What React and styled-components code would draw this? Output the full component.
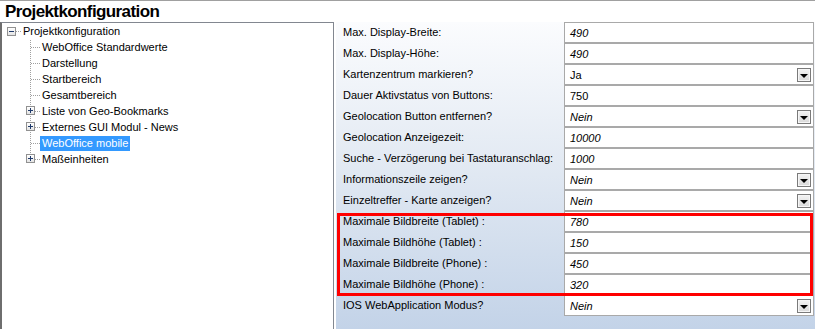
import React from "react";
import styled, { createGlobalStyle, css } from "styled-components";

const GlobalStyle = createGlobalStyle`
  html, body { margin: 0; padding: 0; background: #ffffff; }
  body { font-family: "Liberation Sans", Arial, sans-serif; }
  * { box-sizing: border-box; }
`;

const Window = styled.div`
  width: 815px;
  height: 329px;
  overflow: hidden;
  border-top: 1px solid #a0a0a0;
  background: #ffffff;
  display: flex;
  flex-direction: column;
`;

const Title = styled.div`
  height: 21px;
  padding-left: 5px;
  font-family: "Liberation Sans", Arial, sans-serif;
  font-weight: bold;
  font-size: 17px;
  letter-spacing: -0.6px;
  line-height: 22px;
  color: #000;
`;

const Body = styled.div`
  flex: 1;
  display: flex;
  gap: 2px;
  min-height: 0;
`;

const TreePanel = styled.div`
  width: 334px;
  flex: none;
  border-top: 1px solid #828790;
  border-left: 2px solid #6e6e6e;
  border-right: 1px solid #828790;
  background: #fff;
  font-size: 11px;
  color: #000;
`;

const TreeRow = styled.div`
  height: 16px;
  display: flex;
  align-items: center;
`;

const RootExpander = styled.div`
  width: 9px;
  height: 9px;
  margin-left: 5px;
  flex: none;
  position: relative;
  border: 1px solid #919191;
  background: linear-gradient(#ffffff, #e4e4e4);
  &::before {
    content: "";
    position: absolute;
    left: 1px;
    top: 3px;
    width: 5px;
    height: 1px;
    background: #1f3a6b;
  }
  ${(p) =>
    p.$plus &&
    css`
      &::after {
        content: "";
        position: absolute;
        left: 3px;
        top: 1px;
        width: 1px;
        height: 5px;
        background: #1f3a6b;
      }
    `}
`;

const Dots = styled.div`
  width: ${(p) => p.$w}px;
  flex: none;
  height: 1px;
  background-image: linear-gradient(to right, #a0a0a0 50%, transparent 50%);
  background-size: 2px 1px;
`;

const NodeLabel = styled.span`
  height: 15px;
  line-height: 15px;
  padding: 0 2px;
  white-space: nowrap;
  margin-top: 1px;
  ${(p) =>
    p.$selected &&
    css`
      background: #3399ff;
      color: #fff;
    `}
`;

const ChildList = styled.div`
  position: relative;
  margin-left: 28px;
  &::before {
    content: "";
    position: absolute;
    left: 0;
    top: 1px;
    bottom: 8px;
    width: 1px;
    background-image: linear-gradient(to bottom, #a0a0a0 50%, transparent 50%);
    background-size: 1px 2px;
  }
`;

const Connector = styled.div`
  position: relative;
  width: 10px;
  height: 16px;
  flex: none;
  display: flex;
  align-items: center;
  padding-left: 1px;
`;

const ChildExpander = styled(RootExpander)`
  position: absolute;
  left: -4px;
  top: 3px;
  margin: 0;
`;

const PropPanel = styled.div`
  flex: 1;
  background: linear-gradient(#fbfcfe 0%, #e3eaf3 45%, #c3d3e8 100%);
  padding-right: 1px;
  font-size: 11px;
  color: #000;
`;

const PropRow = styled.div`
  display: grid;
  grid-template-columns: 228px 1fr;
  height: 21px;
`;

const PropLabel = styled.div`
  padding-left: 7px;
  line-height: 21px;
  white-space: nowrap;
`;

const PropValue = styled.div`
  background: #fff;
  border: 1px solid #a9a9a9;
  display: flex;
  align-items: center;
  padding-left: 5px;
  font-style: ${(p) => (p.$italic ? "italic" : "normal")};
`;

const ValueText = styled.span`
  flex: 1;
  white-space: nowrap;
`;

const DropButton = styled.div`
  width: 14px;
  height: 14px;
  margin-right: 2px;
  flex: none;
  border: 1px solid #7a7a7a;
  box-shadow: inset 0 0 0 1px #f6f6f6;
  background: linear-gradient(#f3f3f3, #d9d9d9);
  display: flex;
  align-items: center;
  justify-content: center;
  padding-top: 2px;
  &::after {
    content: "";
    width: 0;
    height: 0;
    border-left: 4px solid transparent;
    border-right: 4px solid transparent;
    border-top: 4px solid #000;
  }
`;

const Highlight = styled.div`
  position: relative;
  &::after {
    content: "";
    position: absolute;
    left: 1px;
    right: 1px;
    top: 2px;
    bottom: -1px;
    border: 3px solid #ff0000;
    pointer-events: none;
  }
`;

const treeChildren = [
  { label: "WebOffice Standardwerte" },
  { label: "Darstellung" },
  { label: "Startbereich" },
  { label: "Gesamtbereich" },
  { label: "Liste von Geo-Bookmarks", expandable: true },
  { label: "Externes GUI Modul - News", expandable: true },
  { label: "WebOffice mobile", selected: true },
  { label: "Maßeinheiten", expandable: true },
];

const propsTop = [
  { label: "Max. Display-Breite:", value: "490", italic: true },
  { label: "Max. Display-Höhe:", value: "490", italic: true },
  { label: "Kartenzentrum markieren?", value: "Ja", dropdown: true },
  { label: "Dauer Aktivstatus von Buttons:", value: "750" },
  { label: "Geolocation Button entfernen?", value: "Nein", italic: true, dropdown: true },
  { label: "Geolocation Anzeigezeit:", value: "10000", italic: true },
  { label: "Suche - Verzögerung bei Tastaturanschlag:", value: "1000", italic: true },
  { label: "Informationszeile zeigen?", value: "Nein", italic: true, dropdown: true },
  { label: "Einzeltreffer - Karte anzeigen?", value: "Nein", italic: true, dropdown: true },
];

const propsHighlighted = [
  { label: "Maximale Bildbreite (Tablet) :", value: "780", italic: true },
  { label: "Maximale Bildhöhe (Tablet) :", value: "150", italic: true },
  { label: "Maximale Bildbreite (Phone) :", value: "450", italic: true },
  { label: "Maximale Bildhöhe (Phone) :", value: "320", italic: true },
];

const propsBottom = [
  { label: "IOS WebApplication Modus?", value: "Nein", italic: true, dropdown: true },
];

function Prop({ p }) {
  return (
    <PropRow>
      <PropLabel>{p.label}</PropLabel>
      <PropValue $italic={p.italic}>
        <ValueText>{p.value}</ValueText>
        {p.dropdown && <DropButton />}
      </PropValue>
    </PropRow>
  );
}

export default function App() {
  return (
    <>
      <GlobalStyle />
      <Window>
        <Title>Projektkonfiguration</Title>
        <Body>
          <TreePanel>
            <TreeRow>
              <RootExpander />
              <Dots $w={5} />
              <NodeLabel>Projektkonfiguration</NodeLabel>
            </TreeRow>
            <ChildList>
              {treeChildren.map((c) => (
                <TreeRow key={c.label}>
                  <Connector>
                    <Dots $w={9} />
                    {c.expandable && <ChildExpander $plus />}
                  </Connector>
                  <NodeLabel $selected={c.selected}>{c.label}</NodeLabel>
                </TreeRow>
              ))}
            </ChildList>
          </TreePanel>
          <PropPanel>
            {propsTop.map((p) => (
              <Prop key={p.label} p={p} />
            ))}
            <Highlight>
              {propsHighlighted.map((p) => (
                <Prop key={p.label} p={p} />
              ))}
            </Highlight>
            {propsBottom.map((p) => (
              <Prop key={p.label} p={p} />
            ))}
          </PropPanel>
        </Body>
      </Window>
    </>
  );
}
